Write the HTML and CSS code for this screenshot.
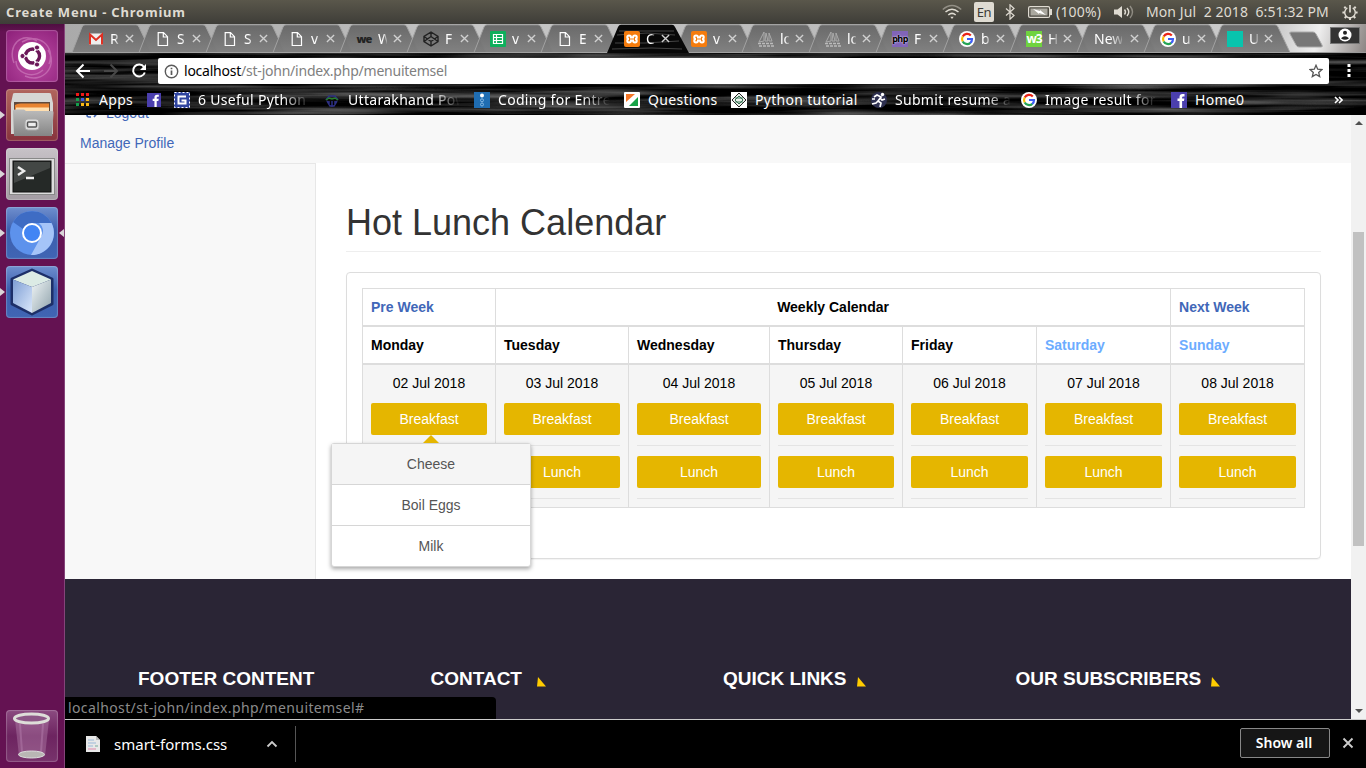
FILE: index.html
```html
<!DOCTYPE html>
<html lang="en">
<head>
<meta charset="utf-8">
<title>Create Menu</title>
<link rel="stylesheet" href="styles.css">
</head>
<body>
<svg class="defs" width="0" height="0" aria-hidden="true">
  <defs>
    <linearGradient id="tabFill" x1="0" y1="0" x2="0" y2="1"><stop offset="0" stop-color="#656565"/><stop offset="1" stop-color="#7e7e7e"/></linearGradient>
    <linearGradient id="folder" x1="0" y1="0" x2="0" y2="1"><stop offset="0" stop-color="#bcbcbc"/><stop offset="1" stop-color="#858585"/></linearGradient>
    <linearGradient id="cubeL" x1="0" y1="0" x2="1" y2="1"><stop offset="0" stop-color="#7e9ed4"/><stop offset="1" stop-color="#dbe8fb"/></linearGradient>
    <linearGradient id="cubeR" x1="0" y1="0" x2="1" y2="1"><stop offset="0" stop-color="#f0f5f6"/><stop offset="1" stop-color="#91a4ad"/></linearGradient>
    <symbol id="tab" viewBox="0 0 82 29"><path d="M1 28.500L11 3Q12 .8 14 .8H65Q67 .8 68 3L80 28.500Z" fill="url(#tabFill)" fill-opacity=".95" stroke="#a2a2a2"/></symbol>
    <symbol id="tabOn" viewBox="0 0 82 29"><path d="M0 29L11 3Q12 .8 14 .8H65Q67 .8 68 3L82 29Z" fill="#080808"/><path d="M12 7h55M10 11l30-2 28 2M8 19h30l34-2M5 25l40-1 30 1" stroke="#444" fill="none"/></symbol>
    <symbol id="close" viewBox="0 0 10 10"><path d="M1 1l8 8M9 1L1 9" stroke="#d0d0d0" stroke-width="1.500"/></symbol>
    <symbol id="doc" viewBox="0 0 16 16"><path d="M3.200 1.700h5.300l4 4v8.800H3.200zM8.300 2v4h4" fill="none" stroke="#fff" stroke-width="1.200"/></symbol>
    <symbol id="xampp" viewBox="0 0 16 16"><rect width="16" height="16" rx="2" fill="#f57c0d"/><path d="M5 4.500a1.700 1.700 0 1 0 0 3.500a1.700 1.700 0 1 0 0 3.500q2 0 2-2h2q0 2 2 2a1.700 1.700 0 1 0 0-3.500a1.700 1.700 0 1 0 0-3.500q-2 0-2 2H7q0-2-2-2" fill="none" stroke="#fff" stroke-width="2"/></symbol>
    <symbol id="google" viewBox="0 0 16 16"><circle cx="8" cy="8" r="8" fill="#fff"/><g fill="none" stroke-width="2.200"><path d="M11.800 4.500A5 5 0 0 0 3.700 5.600" stroke="#ea2416"/><path d="M3.700 5.500a5 5 0 0 0 0 5" stroke="#fbbc05"/><path d="M3.700 10.400a5 5 0 0 0 7.700 1.400" stroke="#24a453"/><path d="M8 8h5a5 5 0 0 1-1.800 4" stroke="#3d5cf5"/></g></symbol>
    <symbol id="pma" viewBox="0 0 16 16"><path d="M6 1v9L1 11zM8 2l2 8H7zM11 2l3 8h-3z" fill="none" stroke="#aaa"/><path d="M0 12.500h16M1 15h15" stroke="#bbb" stroke-width="1.500" stroke-dasharray="3 1"/></symbol>
    <symbol id="fb" viewBox="0 0 16 16"><rect width="16" height="16" fill="#4b3fae"/><path d="M8.500 16V9H6.500V6.500h2V5q0-3 3-3h2v2.400h-1.400q-1 0-1 1v1.100h2.300L13 9h-1.900v7z" fill="#fff"/></symbol>
  </defs>
</svg>

<header class="panel">
  <span class="panel-title">Create Menu - Chromium</span>
  <div class="indicators">
    <svg class="i-wifi" width="20" height="16" viewBox="0 0 20 16" fill="none" stroke="#dfdbd2" stroke-width="1.500"><path d="M.8 5.500q9.200-8 18.400 0" opacity=".45"/><path d="M3.500 8q6.500-5.500 13 0M6.300 11q3.700-3.200 7.400 0"/><path d="M8.300 12.700h3.400L10 15z" fill="#dfdbd2" stroke="none"/></svg>
    <span class="i-lang">En</span>
    <svg class="i-bt" width="10" height="16" viewBox="0 0 10 16" fill="none" stroke="#dfdbd2" stroke-width="1.200"><path d="M1 4.500l8 7-4 3.700V.8l4 3.700-8 7"/></svg>
    <svg class="i-bat" width="25" height="12" viewBox="0 0 25 12"><rect x=".6" y=".6" width="21" height="10.800" rx="1.500" fill="none" stroke="#dfdbd2" stroke-width="1.200"/><rect x="2.500" y="2.500" width="17" height="7" fill="#aaa89f"/><path d="M23 3v6" stroke="#dfdbd2" stroke-width="2"/><path d="M5 3l7 2v-1l6 5-7-2v1z" fill="#fff"/></svg>
    <span class="i-pct">(100%)</span>
    <svg class="i-vol" width="20" height="14" viewBox="0 0 20 14"><path d="M0 4.500h3.500L8 1v12L3.500 9.500H0z" fill="#dfdbd2"/><g fill="none" stroke="#dfdbd2" stroke-width="1.400"><path d="M10.500 4.500q2 2.500 0 5M13 3q3.500 4 0 8"/><path d="M16 1q5 6 0 12" opacity=".45"/></g></svg>
    <span class="i-date">Mon Jul&nbsp; 2 2018&nbsp; 6:51:32 PM</span>
    <svg class="i-gear" width="16" height="16" viewBox="0 0 16 16" fill="none" stroke="#dfdbd2"><circle cx="8" cy="8.500" r="5.300" stroke-width="1.400" stroke-dasharray="27 6.300" transform="rotate(-59 8 8.500)"/><path d="M8 1v7.500" stroke-width="1.700"/><path d="M3.700 4.200L2.300 2.800M12.300 4.200l1.400-1.400M2.500 8.500H.4M13.500 8.500h2.100M4.200 12.500l-1.500 1.500M11.800 12.500l1.500 1.500M8 14v2" stroke-width="2"/></svg>
  </div>
</header>

<div class="desktop">
<nav class="launcher">
  <div class="tile t-dash"><svg viewBox="0 0 52 52"><path d="M8 33C1 15 16 1 31 11M19 46C38 54 52 35 42 20M10 31C10 42 25 50 37 40M16 12C32 2 50 16 43 34" fill="none" stroke="#d58bc5" stroke-width="1.500" opacity=".55"/><circle cx="26" cy="26" r="14" fill="#fff"/><circle cx="26.500" cy="26" r="7" fill="none" stroke="#6b1759" stroke-width="3.500"/><path d="M26 26L16 26M26 26l5-9M26 26l5 9" stroke="#fff" stroke-width="1.600"/><circle cx="26.500" cy="26" r="5" fill="#fff"/><g fill="#6b1759" stroke="#fff"><circle cx="16.500" cy="26" r="2.600"/><circle cx="31" cy="17.500" r="2.600"/><circle cx="31" cy="34.500" r="2.600"/></g></svg></div>
  <div class="tile t-files run"><svg viewBox="0 0 52 52"><path d="M7 5q0-1 2-1h34q2 0 2 1l2 9v31H5V14z" fill="#d6d6d4"/><path d="M8 13h36v12H8z" fill="#5f4a3e"/><path d="M9 16q2-2 8-1.500h26V24H9z" fill="#e98431"/><path d="M10 18.500h33V24H10z" fill="#ffdfb0"/><path d="M7 22q0-1.500 2-1.500h9l2 1.500h26q2 0 1.500 2L46 47H8z" fill="url(#folder)"/><rect x="19" y="30" width="14" height="11" rx="3" fill="#ddd" stroke="#aaa"/><rect x="21.500" y="33" width="9" height="5" rx="1" fill="#eee" stroke="#555" stroke-width="1.500"/></svg></div>
  <div class="tile t-term run"><svg viewBox="0 0 52 52"><rect x="3.500" y="10.500" width="45" height="36" fill="#ddd" stroke="#888"/><rect x="7" y="13" width="38" height="31" fill="#252927" stroke="#111"/><path d="M8 14h36v6L8 35z" fill="#fff" opacity=".14"/><path d="M12 19l6 4-6 4M20 30h8" fill="none" stroke="#eee" stroke-width="2.400"/></svg></div>
  <div class="tile t-chrome run active"><svg viewBox="0 0 52 52"><circle cx="26" cy="26" r="22" fill="#5d92ec"/><path d="M7 15A22 22 0 0 1 45.500 16H26a10 10 0 0 0-9 6z" fill="#3e6cc4"/><path d="M45.500 16A22 22 0 0 1 25 48l10-18a10 10 0 0 0-2-14z" fill="#a5c4f8"/><circle cx="26" cy="26" r="9" fill="#4285f4" stroke="#fff" stroke-width="2"/></svg></div>
  <div class="tile t-cube run"><svg viewBox="0 0 52 52"><path d="M26 4l20 9v25L26 48 6 38V13z" fill="#1d2f68" stroke="#1d2f68" stroke-width="3" stroke-linejoin="round"/><path d="M7 13.500L26 5l19 8.500L26 21z" fill="#dcebe5"/><path d="M7 13.500L26 21v26L7 37z" fill="url(#cubeL)"/><path d="M45 13.500L26 21v26l19-10z" fill="url(#cubeR)"/></svg></div>
  <div class="tile t-trash"><svg viewBox="0 0 52 52"><path d="M9 10h34l-4 36q-13 4-26 0z" fill="#d0a8cb" opacity=".3"/><path d="M14 14l2 28M37 14l-2 28" stroke="#c490bd" stroke-width="2" opacity=".35"/><ellipse cx="25.500" cy="8.500" rx="17" ry="4.500" fill="#8d5786" stroke="#deded9" stroke-width="3"/><ellipse cx="25.500" cy="44.500" rx="13" ry="3.500" fill="#b9b6b4" stroke="#ddd"/></svg></div>
</nav>

<main class="window">
  <section class="chrome">
    <svg class="texture" width="1301" height="91">
      <filter id="streaks" x="0" y="0" width="100%" height="100%" color-interpolation-filters="sRGB"><feTurbulence type="fractalNoise" baseFrequency=".005 .16" numOctaves="3" seed="8"/><feColorMatrix values=".8 0 0 0 -.29  .8 0 0 0 -.29  .8 0 0 0 -.29  0 0 0 0 1"/></filter>
      <rect width="1301" height="91" filter="url(#streaks)"/>
    </svg>
    <div class="tabs">
      <div class="tab"><svg class="shape"><use href="#tab"/></svg><svg class="fav" viewBox="0 0 16 16"><path d="M1 2.500h14v11H1z" fill="#eee"/><path d="M2 13.500V3.500L8 9l6-5.500v10" fill="none" stroke="#df3023" stroke-width="2"/></svg><span>R</span><svg class="x"><use href="#close"/></svg></div>
      <div class="tab"><svg class="shape"><use href="#tab"/></svg><svg class="fav"><use href="#doc"/></svg><span>S</span><svg class="x"><use href="#close"/></svg></div>
      <div class="tab"><svg class="shape"><use href="#tab"/></svg><svg class="fav"><use href="#doc"/></svg><span>S</span><svg class="x"><use href="#close"/></svg></div>
      <div class="tab"><svg class="shape"><use href="#tab"/></svg><svg class="fav"><use href="#doc"/></svg><span>v</span><svg class="x"><use href="#close"/></svg></div>
      <div class="tab"><svg class="shape"><use href="#tab"/></svg><b class="fav we">we</b><span>W</span><svg class="x"><use href="#close"/></svg></div>
      <div class="tab"><svg class="shape"><use href="#tab"/></svg><svg class="fav" viewBox="0 0 16 16" fill="none" stroke="#222" stroke-width="1.400"><path d="M8 1l7 4.500v5L8 15l-7-4.500v-5zM8 1v4.500M8 10.500V15M1 5.500l7 5 7-5M1 10.500l7-5 7 5"/></svg><span>F</span><svg class="x"><use href="#close"/></svg></div>
      <div class="tab"><svg class="shape"><use href="#tab"/></svg><svg class="fav" viewBox="0 0 16 16"><rect width="16" height="16" rx="1" fill="#0faf5c"/><path d="M3.500 3.500h9v9h-9zM3.500 6.500h9M3.500 9.500h9M6.500 3.500v9" fill="none" stroke="#fff" stroke-width="1.200"/></svg><span>v</span><svg class="x"><use href="#close"/></svg></div>
      <div class="tab"><svg class="shape"><use href="#tab"/></svg><svg class="fav"><use href="#doc"/></svg><span>E</span><svg class="x"><use href="#close"/></svg></div>
      <div class="tab on"><svg class="shape"><use href="#tabOn"/></svg><svg class="fav"><use href="#xampp"/></svg><span>C</span><svg class="x"><use href="#close"/></svg></div>
      <div class="tab"><svg class="shape"><use href="#tab"/></svg><svg class="fav"><use href="#xampp"/></svg><span>v</span><svg class="x"><use href="#close"/></svg></div>
      <div class="tab"><svg class="shape"><use href="#tab"/></svg><svg class="fav"><use href="#pma"/></svg><span>lo</span><svg class="x"><use href="#close"/></svg></div>
      <div class="tab"><svg class="shape"><use href="#tab"/></svg><svg class="fav"><use href="#pma"/></svg><span>lo</span><svg class="x"><use href="#close"/></svg></div>
      <div class="tab"><svg class="shape"><use href="#tab"/></svg><b class="fav php">php</b><span>F</span><svg class="x"><use href="#close"/></svg></div>
      <div class="tab"><svg class="shape"><use href="#tab"/></svg><svg class="fav"><use href="#google"/></svg><span>b</span><svg class="x"><use href="#close"/></svg></div>
      <div class="tab"><svg class="shape"><use href="#tab"/></svg><b class="fav w3">w3</b><span>H</span><svg class="x"><use href="#close"/></svg></div>
      <div class="tab wide"><svg class="shape"><use href="#tab"/></svg><span>New</span><svg class="x"><use href="#close"/></svg></div>
      <div class="tab"><svg class="shape"><use href="#tab"/></svg><svg class="fav"><use href="#google"/></svg><span>u</span><svg class="x"><use href="#close"/></svg></div>
      <div class="tab"><svg class="shape"><use href="#tab"/></svg><i class="fav teal"></i><span>U</span><svg class="x"><use href="#close"/></svg></div>
      <svg class="newtab" width="35" height="17" viewBox="0 0 35 17"><path d="M2 1h22q2 0 3 2l6 11q1 2-1 2H10q-2 0-3-2L1 3Q0 1 2 1z" fill="#777" stroke="#aaa"/></svg>
      <div class="user"><svg width="14" height="14" viewBox="0 0 14 14"><circle cx="7" cy="7" r="6.500" fill="#fff"/><circle cx="7" cy="4.700" r="2" fill="#222"/><path d="M3 10.200q4-4 8 0-4 3.300-8 0" fill="#222"/></svg></div>
    </div>
    <div class="toolbar">
      <svg class="nav-ic" width="16" height="16" viewBox="0 0 16 16" fill="none" stroke="#fff" stroke-width="2"><path d="M15 8H2M8.500 1.500L2 8l6.500 6.500"/></svg>
      <svg class="nav-ic" width="16" height="16" viewBox="0 0 16 16" fill="none" stroke="#484848" stroke-width="2"><path d="M1 8h13M7.500 1.500L14 8l-6.500 6.500"/></svg>
      <svg class="nav-ic" width="16" height="16" viewBox="0 0 16 16" fill="none" stroke="#fff" stroke-width="2"><path d="M13 4A6 6 0 1 0 13.800 9.500"/><path d="M15 1v6H9z" fill="#fff" stroke="none"/></svg>
      <div class="omnibox">
        <svg width="15" height="15" viewBox="0 0 15 15" fill="none" stroke="#5a5a5a" stroke-width="1.400"><circle cx="7.500" cy="7.500" r="6.200"/><path d="M7.500 6.500v4.500M7.500 3.800v1.500" stroke-width="1.700"/></svg>
        <span class="url">localhost<em>/st-john/index.php/menuitemsel</em></span>
        <svg class="star" width="14" height="14" viewBox="0 0 14 14" fill="none" stroke="#555" stroke-width="1.300"><path d="M7 1.300l1.700 3.900 4.200.4-3.200 2.800 1 4.200L7 10.400l-3.700 2.200 1-4.200L1.100 5.600l4.200-.4z"/></svg>
      </div>
      <svg class="kebab" width="4" height="14" viewBox="0 0 4 14" fill="#fff"><path d="M.5 0h3v3h-3zM.5 5h3v3h-3zM.5 10h3v3h-3z"/></svg>
    </div>
    <div class="bookmarks">
      <div class="bm b-apps"><svg viewBox="0 0 14 14"><path d="M0 0h3v3H0zM5 0h3v3H5zM10 0h3v3h-3z" fill="#f01818"/><path d="M0 5h3v3H0zM0 10h3v3H0z" fill="#14a04c"/><path d="M5 5h3v3H5z" fill="#3e59df"/><path d="M10 5h3v3h-3zM5 10h3v3H5zM10 10h3v3h-3z" fill="#fbb813"/></svg><span>Apps</span></div>
      <div class="bm b-fb"><svg><use href="#fb"/></svg></div>
      <div class="bm fade"><svg viewBox="0 0 16 16"><rect width="16" height="16" fill="#3045a0"/><path d="M.5 .5h15v15H.5z" fill="none" stroke="#fff" stroke-dasharray="2 2"/><path d="M12 4.500H4.500v7h7v-3H7.500" fill="none" stroke="#fff" stroke-width="2"/></svg><span>6 Useful Python T</span></div>
      <div class="bm fade"><svg viewBox="0 0 16 16"><path d="M2 8l3-4h6l3 4M3 9l3 5h4l3-5M5 9v4M8 9v6M11 9v4" fill="none" stroke="#2d2f82" stroke-width="1.500"/><path d="M2 8l3-2 3 1 3-1 3 2" fill="none" stroke="#28802d" stroke-width="1.500"/></svg><span>Uttarakhand Power</span></div>
      <div class="bm fade"><svg viewBox="0 0 16 16"><rect width="16" height="16" fill="#1f6db2"/><circle cx="8" cy="3.500" r="2" fill="#fff"/><g fill="none" stroke="#84b8e4"><circle cx="8" cy="8.300" r="1.500"/><circle cx="8" cy="12.500" r="1.500"/></g></svg><span>Coding for Entrep</span></div>
      <div class="bm b-q"><svg viewBox="0 0 16 16"><rect width="16" height="16" rx="1" fill="#fff"/><path d="M2 10V2h9z" fill="#f57728"/><path d="M5 14L14 5v9z" fill="#18a347"/></svg><span>Questions</span></div>
      <div class="bm b-py"><svg viewBox="0 0 16 16"><rect width="16" height="16" fill="#fff"/><path d="M8 1l7 7-7 7-7-7z" fill="#e9eee9" stroke="#222"/><path d="M8 4l4 4-4 4-4-4zM4 6h8M4 10h8" fill="none" stroke="#387554"/></svg><span>Python tutorial</span></div>
      <div class="bm fade"><svg viewBox="0 0 16 16"><circle cx="8" cy="8" r="8" fill="#2e3050"/><circle cx="11.500" cy="2.500" r="1.700" fill="#fff"/><path d="M3 5l3-2 4 2-3 4 3 2-1 4M7 9l-2 2-4 1M9 6l2 2 3-1M1 7h3" fill="none" stroke="#fff" stroke-width="1.700"/></svg><span class="long">Submit resume a</span></div>
      <div class="bm fade"><svg><use href="#google"/></svg><span>Image result for p</span></div>
      <div class="bm"><svg><use href="#fb"/></svg><span>Home0</span></div>
      <svg class="more" width="9" height="8" viewBox="0 0 9 8" fill="none" stroke="#fff" stroke-width="1.600"><path d="M1 1l3 3-3 3M5 1l3 3-3 3"/></svg>
    </div>
  </section>

  <section class="viewport">
    <div class="page">
      <div class="topnav"><div class="logout"><svg width="12" height="12" viewBox="0 0 12 12" fill="none" stroke="#4167b8" stroke-width="1.600"><path d="M4 2H2Q1 2 1 4v4q0 2 2 2h2M5 6h6M8 2l3.500 4L8 10"/></svg>Logout</div><a>Manage Profile</a></div>
      <div class="body-row">
        <aside class="side"></aside>
        <div class="content">
          <h1>Hot Lunch Calendar</h1>
          <div class="card">
            <table class="cal">
              <colgroup><col class="c133"><col class="c133"><col class="c141"><col class="c133"><col class="c134"><col class="c134"><col class="c135"></colgroup>
              <tr><th class="link">Pre Week</th><th colspan="5" class="mid">Weekly Calendar</th><th class="link">Next Week</th></tr>
              <tr><th>Monday</th><th>Tuesday</th><th>Wednesday</th><th>Thursday</th><th>Friday</th><th class="wkend">Saturday</th><th class="wkend">Sunday</th></tr>
              <tr>
                <td><p>02 Jul 2018</p><div class="drop"><a class="btn">Breakfast</a><ul class="menu"><li class="hover">Cheese</li><li>Boil Eggs</li><li>Milk</li></ul></div><hr><a class="btn"></a><hr></td>
                <td><p>03 Jul 2018</p><a class="btn">Breakfast</a><hr><a class="btn">Lunch</a><hr></td>
                <td><p>04 Jul 2018</p><a class="btn">Breakfast</a><hr><a class="btn">Lunch</a><hr></td>
                <td><p>05 Jul 2018</p><a class="btn">Breakfast</a><hr><a class="btn">Lunch</a><hr></td>
                <td><p>06 Jul 2018</p><a class="btn">Breakfast</a><hr><a class="btn">Lunch</a><hr></td>
                <td><p>07 Jul 2018</p><a class="btn">Breakfast</a><hr><a class="btn">Lunch</a><hr></td>
                <td><p>08 Jul 2018</p><a class="btn">Breakfast</a><hr><a class="btn">Lunch</a><hr></td>
              </tr>
            </table>
          </div>
        </div>
      </div>
      <footer class="foot">
        <h4>FOOTER CONTENT</h4>
        <h4>CONTACT<svg class="w15" viewBox="0 0 9 10"><path d="M1 0l8 9.500H0z" fill="#fc0"/></svg></h4>
        <h4>QUICK LINKS<svg class="w11" viewBox="0 0 9 10"><path d="M1 0l8 9.500H0z" fill="#fc0"/></svg></h4>
        <h4>OUR SUBSCRIBERS<svg class="w11" viewBox="0 0 9 10"><path d="M1 0l8 9.500H0z" fill="#fc0"/></svg></h4>
      </footer>
      <div class="status">localhost/st-john/index.php/menuitemsel#</div>
    </div>
    <div class="scroll"><i class="up"></i><div class="thumb"></div><i class="down"></i></div>
  </section>

  <section class="shelf">
    <div class="dl"><svg width="16" height="18" viewBox="0 0 16 18"><path d="M1 1h10l4 4v12H1z" fill="#e8e8e8"/><path d="M11 1v4h4" fill="#bbb"/><path d="M3 5h6M3 8h8M3 11h5" stroke="#9bb9d8"/><path d="M3 14h8" stroke="#d8a"/><path d="M10 11h3" stroke="#7a9"/></svg><span>smart-forms.css</span><svg class="caret" width="12" height="8" viewBox="0 0 12 8" fill="none" stroke="#ccc" stroke-width="1.800"><path d="M1.500 6.500L6 2l4.500 4.500"/></svg></div>
    <button class="showall">Show all</button>
    <svg class="shelf-x" width="12" height="12" viewBox="0 0 12 12" stroke="#ccc" stroke-width="1.900"><path d="M1.500 1.500l9 9M10.500 1.500l-9 9"/></svg>
  </section>
</main>
</div>
</body>
</html>
```
FILE: styles.css
```css
* { box-sizing: border-box; }
body { margin: 0; width: 1366px; height: 768px; overflow: hidden; font: 14px/20px "Liberation Sans", Arial, sans-serif; color: #000; background: #fff; }
svg { display: block; flex: none; }
.defs { position: absolute; }
.panel, .chrome, .status, .shelf { font-family: "Noto Sans", sans-serif; }

/* system bar */
.panel { height: 24px; display: flex; align-items: center; justify-content: space-between; padding: 0 8px 0 6px; background: linear-gradient(#5a574b, #3e3d38); color: #dfdbd2; }
.panel-title { font-size: 13px; font-weight: 700; letter-spacing: .8px; }
.indicators { display: flex; align-items: center; font-size: 14px; white-space: nowrap; }
.i-lang { width: 20px; height: 20px; margin: 0 11px 0 12px; border-radius: 2px; background: #dfdbd2; color: #3c3b37; text-align: center; font-size: 13px; letter-spacing: -.5px; }
.i-bat { margin: 0 3px 0 13px; }
.i-pct { width: 58px; letter-spacing: .2px; }
.i-vol { margin-right: 12px; }
.i-date { width: 183px; margin-right: 13px; letter-spacing: .1px; }

.desktop { display: flex; height: 744px; }

/* launcher */
.launcher { width: 65px; display: flex; flex-direction: column; gap: 7px; padding: 6px; background: linear-gradient(#4f0e41, #641252 8px, #641252); border-right: 1px solid #85447a; }
.tile { position: relative; width: 52px; height: 52px; border-radius: 4px; box-shadow: inset 0 0 1px 1px rgba(255,255,255,.22); }
.tile svg { width: 52px; height: 52px; }
.t-dash { background: radial-gradient(circle at 55% 60%, #bd4da5, #8b1e78); }
.t-files { background: linear-gradient(#b1655d, #87333d); }
.t-term { background: linear-gradient(#c7c2c7, #a39ca3); }
.t-chrome, .t-cube { background: linear-gradient(#6f8fce, #3c5fae 45%, #4065b4); }
.t-trash { margin-top: auto; background: linear-gradient(#8b4a80, #6d2460 50%, #78336c); }
.run::before { content: ""; position: absolute; left: -6px; top: 22px; border: 4px solid transparent; border-left: 5px solid #d9d5d8; border-right: 0; }
.active::after { content: ""; position: absolute; right: -6px; top: 22px; border: 4px solid transparent; border-right: 5px solid #d9d5d8; border-left: 0; }

/* browser chrome */
.window { width: 1301px; display: flex; flex-direction: column; }
.chrome { position: relative; height: 91px; background: #111; color: #fff; }
.texture { position: absolute; left: 0; top: 0; }
.tabs { position: relative; height: 29px; display: flex; align-items: center; padding-left: 6px; background: linear-gradient(105deg, #aaa, #b4b4b4 18%, #c6c6c6 32%, #bbb 55%, #c0c0c0 75%, #ccc 93%, #eee 96%, #8b8583); border-bottom: 1px solid #999; }
.tab { position: relative; width: 67px; height: 29px; display: flex; align-items: center; padding: 1px 0 0 17px; flex: none; }
.tab .shape { position: absolute; left: 0; top: 0; width: 82px; height: 29px; }
.tab.on { z-index: 2; }
.tab .fav { position: relative; width: 16px; height: 16px; flex: none; }
.tab span { position: relative; width: 9px; margin: 0 6px; overflow: hidden; font-size: 14px; -webkit-mask-image: linear-gradient(90deg, #000 55%, rgba(0,0,0,.25)); mask-image: linear-gradient(90deg, #000 55%, rgba(0,0,0,.25)); }
.tab .x { position: relative; width: 9px; height: 9px; flex: none; }
.tab.wide { padding-left: 18px; }
.tab.wide span { width: 28px; margin: 0 8px 0 0; }
.we, .php, .w3 { display: block; line-height: 15px; text-align: center; font-size: 12px; letter-spacing: -1px; color: #222; }
.we { font-weight: 900; font-size: 11px; }
.php { background: #8064b8; color: #000; font-size: 9px; letter-spacing: -.5px; text-shadow: 0 0 2px #fff; }
.w3 { background: #6fd33f; color: #fff; }
.teal { background: #08c4ad; }
.newtab { position: relative; margin: 2px 6px 0 12px; }
.user { width: 30px; height: 17px; margin: -6px 6px 0 auto; display: flex; justify-content: center; align-items: center; background: #333; border: 1px solid #777; z-index: 1; }
.toolbar { position: relative; height: 36px; display: flex; align-items: center; padding: 0 15px 0 10px; }
.nav-ic { margin-right: 12px; }
.nav-ic:nth-child(3) { margin-right: 11px; }
.omnibox { width: 1171px; height: 26px; display: flex; align-items: center; padding: 0 6px; background: #fff; border-radius: 2px; color: #000; }
.url { margin-left: 5px; font-size: 14px; letter-spacing: -.23px; }
.url em { font-style: normal; color: #808080; }
.star { margin-left: auto; }
.kebab { margin-left: auto; }
.bookmarks { position: relative; height: 26px; display: flex; align-items: center; padding: 0 23px 4px 11px; font-size: 14px; letter-spacing: .3px; white-space: nowrap; }
.bm { display: flex; align-items: center; gap: 8px; width: 150px; }
.bm svg { width: 16px; height: 16px; }
.bm span { max-width: 112px; overflow: hidden; }
.fade span { -webkit-mask-image: linear-gradient(90deg, #000 75%, transparent); mask-image: linear-gradient(90deg, #000 75%, transparent); }
.bm .long { max-width: 117px; -webkit-mask-image: linear-gradient(90deg, #000 80%, transparent); mask-image: linear-gradient(90deg, #000 80%, transparent); }
.b-apps { width: 71px; gap: 9px; }
.b-apps svg, .b-fb svg { width: 14px; height: 14px; }
.b-fb { width: 27px; }
.b-q { width: 107px; }
.b-py { width: 140px; }
.more { margin-left: auto; }

/* page viewport */
.viewport { height: 604px; display: flex; }
.page { position: relative; width: 1286px; overflow: hidden; }
.topnav { height: 48px; padding-left: 15px; background: #f8f8f8; color: #4167b8; overflow: hidden; }
.logout { display: flex; align-items: center; gap: 8px; height: 20px; margin-top: -12px; padding-left: 6px; }
.topnav a { display: block; margin-top: 10px; }
.body-row { display: flex; height: 416px; }
.side { flex: none; width: 251px; background: #f8f8f8; border: solid #e7e7e7; border-width: 1px 1px 0 0; }
.content { flex: 1; min-width: 0; padding: 40px 30px 0; }
h1 { margin: 0 0 20px; height: 49px; border-bottom: 1px solid #eee; font-weight: 400; font-size: 36px; line-height: 40px; color: #333; }
.card { height: 287px; padding: 15px; border: 1px solid #ddd; border-radius: 4px; box-shadow: 0 1px 1px rgba(0,0,0,.05); }
.cal { width: 943px; table-layout: fixed; border-collapse: separate; border-spacing: 0; border-top: 1px solid #ddd; }
.c133 { width: 133px; } .c134 { width: 134px; } .c135 { width: 135px; } .c141 { width: 141px; }
.cal th, .cal td { padding: 8px; border-left: 1px solid #ddd; text-align: left; vertical-align: top; }
.cal th:last-child, .cal td:last-child { border-right: 1px solid #ddd; }
.cal th { border-bottom: 2px solid #ddd; }
.cal .mid { text-align: center; }
.cal .link { color: #4167b8; }
.cal .wkend { color: #6cacff; }
.cal td { background: #f5f5f5; text-align: center; border-bottom: 1px solid #ddd; }
.cal p { margin: 0 0 10px; }
.cal hr { height: 1px; border: 0; margin: 10px 0; background: #e4e4e4; }
.cal hr:last-child { margin-bottom: 0; }
.btn { display: block; height: 32px; line-height: 32px; border-radius: 2px; background: #e5b600; color: #fff; }
.drop { position: relative; }
.menu { position: absolute; z-index: 3; left: -40px; top: 40px; width: 200px; margin: 0; padding: 0; list-style: none; background: #fff; border: 1px solid #d6d6d6; border-radius: 3px; box-shadow: 0 2px 4px rgba(0,0,0,.35); color: #555; }
.menu::before { content: ""; position: absolute; left: 91px; top: -9px; border: 8px solid transparent; border-top: 0; border-bottom-color: #e5b600; }
.menu li { height: 41px; line-height: 40px; border-bottom: 1px solid #d6d6d6; }
.menu li:last-child { height: 40px; border: 0; }
.menu .hover { background: #f5f5f5; }
.foot { height: 140px; display: grid; grid-template-columns: repeat(4, 292.5px); padding: 88px 0 0 73px; background: #2a2535; color: #fff; }
.foot h4 { margin: 0; display: flex; font-size: 19px; line-height: 24px; white-space: nowrap; }
.foot svg { width: 9px; height: 10px; margin-top: 10px; }
.foot .w15 { margin-left: 15px; } .foot .w11 { margin-left: 10px; }
.status { position: absolute; left: 0; bottom: 0; width: 431px; height: 22px; line-height: 22px; padding-left: 3px; background: #000; color: #8b8b8b; border-top-right-radius: 4px; font-size: 14px; letter-spacing: .38px; }
.scroll { width: 15px; display: flex; flex-direction: column; align-items: center; background: #f1f1f1; }
.up { margin-top: 6px; border: 4px solid transparent; border-top: 0; border-bottom-color: #505050; }
.thumb { margin-top: 107px; width: 11px; height: 314px; background: #c1c1c1; }
.down { margin: auto 0 6px; border: 4px solid transparent; border-bottom: 0; border-top-color: #505050; }

/* download shelf */
.shelf { height: 49px; display: flex; align-items: center; padding-right: 12px; background: #000; border-top: 1px solid #ccc; color: #fff; }
.dl { width: 231px; height: 36px; display: flex; align-items: center; padding-left: 20px; border-right: 1px solid #555; }
.dl span { margin-left: 13px; font-size: 15px; }
.caret { margin: 0 17px 0 auto; }
.showall { margin: -2px 0 0 auto; width: 90px; height: 30px; padding: 0 2px 2px 0; border: 1px solid #888; border-radius: 2px; background: #161616; color: #fff; font: 600 14px "Noto Sans", sans-serif; }
.shelf-x { margin: -2px 0 0 12px; }
```
